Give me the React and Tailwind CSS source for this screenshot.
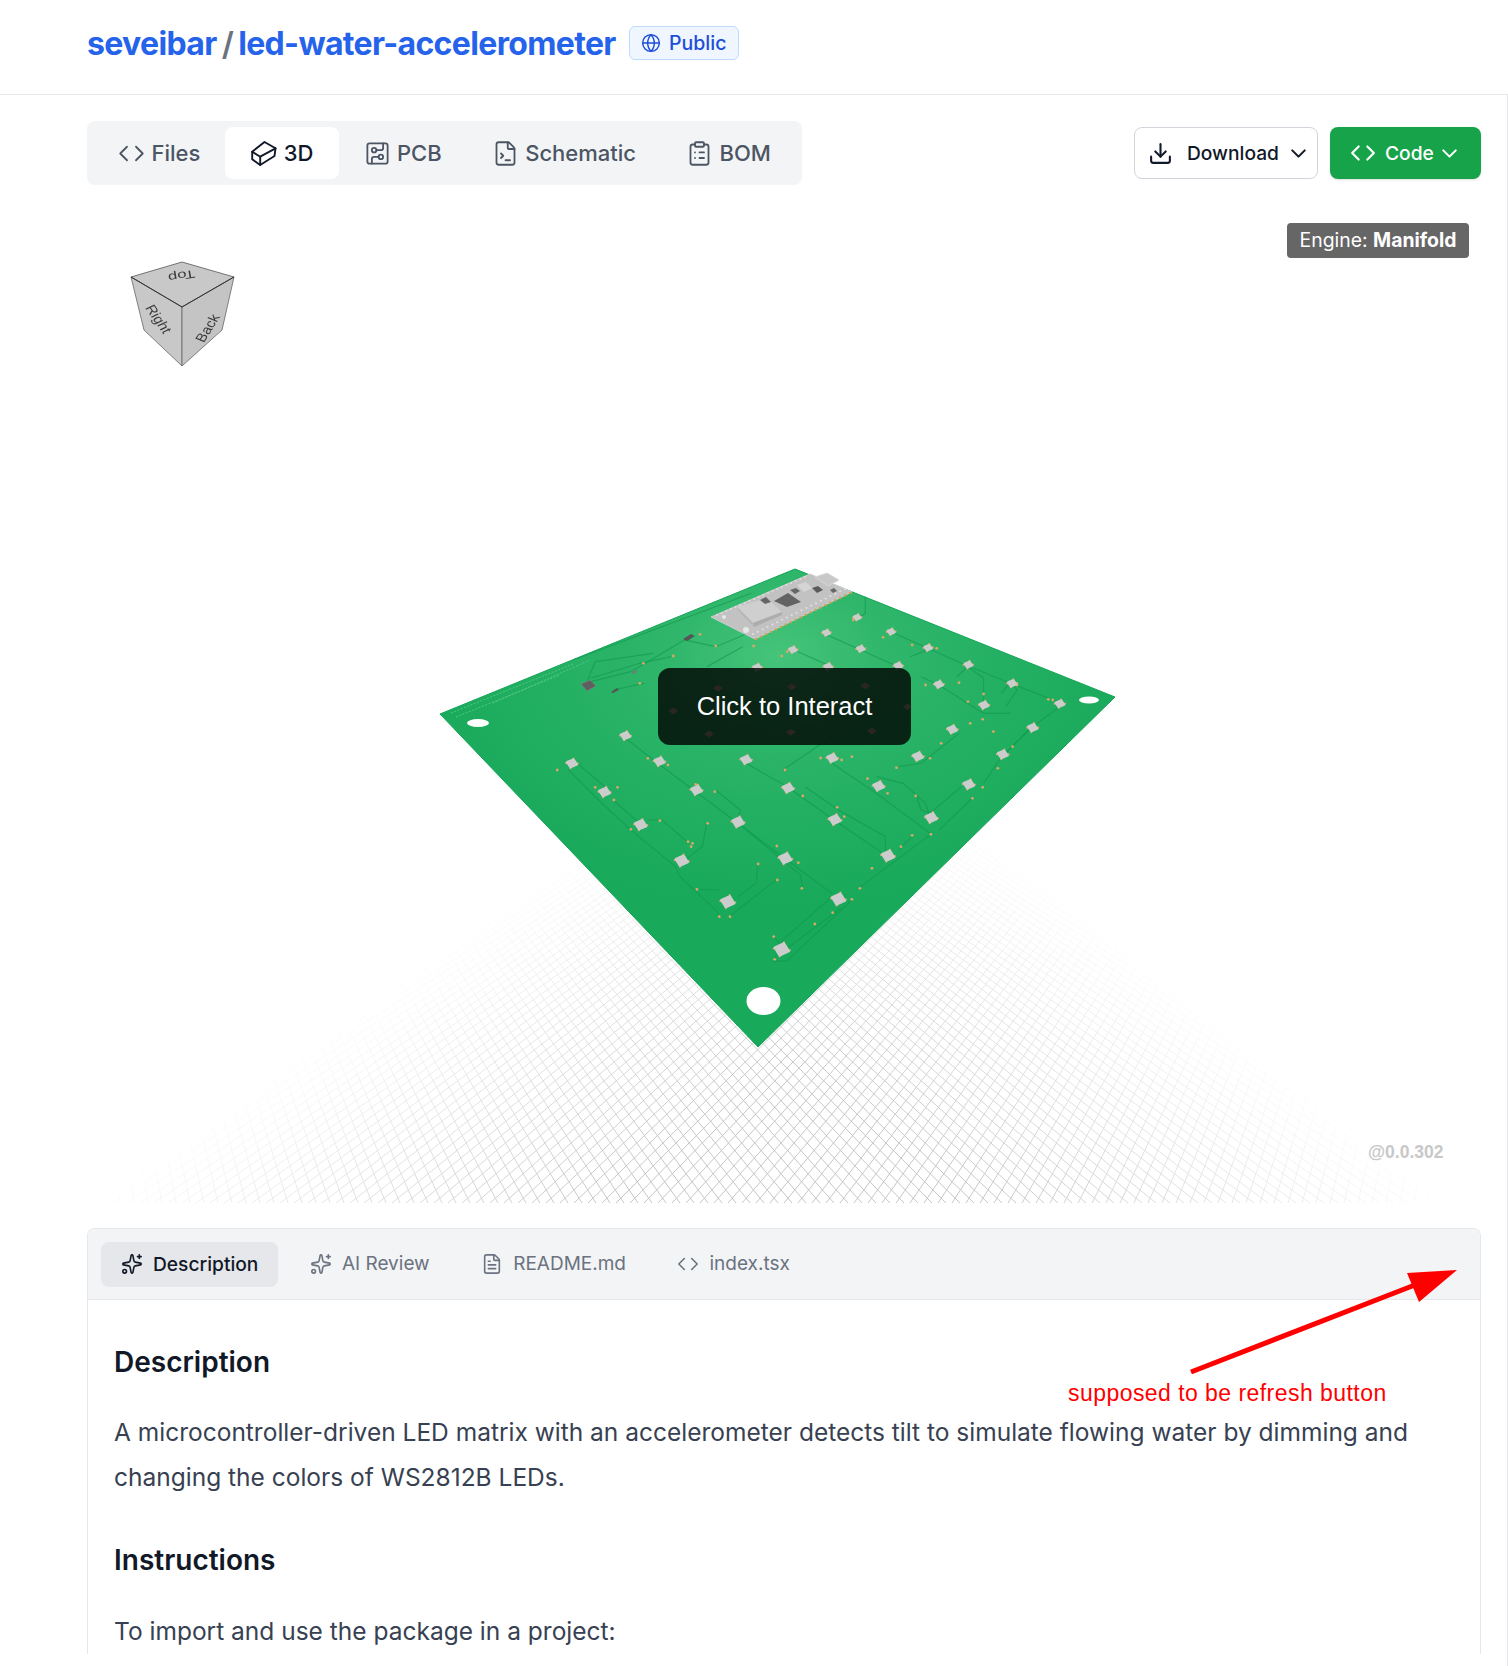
import {
  ChevronDown,
  CircuitBoard,
  ClipboardList,
  Code,
  Download,
  FileTerminal,
  FileText,
  Globe,
  Sparkles,
} from "lucide-react";

// the flat cuboid from the 3D tab, lucide's Box is too tall for it
function FlatBox({ size, className }) {
  return (
    <svg
      className={className}
      width={size}
      height={size}
      viewBox="0 0 27 27"
      fill="none"
      stroke="currentColor"
      strokeWidth="1.9"
      strokeLinejoin="round"
      strokeLinecap="round"
    >
      <path d="M14.5 2 25.5 8.3 24.5 16 10.2 25 2.2 19.3 2.2 11.7Z" />
      <path d="M2.2 11.7 10.2 16.7 25.5 8.3M10.2 16.7V25" />
    </svg>
  );
}

const tabs = [
  { label: "Files", icon: Code },
  { label: "3D", icon: FlatBox, active: true },
  { label: "PCB", icon: CircuitBoard },
  { label: "Schematic", icon: FileTerminal },
  { label: "BOM", icon: ClipboardList },
];

const cardTabs = [
  { label: "Description", icon: Sparkles, active: true },
  { label: "AI Review", icon: Sparkles },
  { label: "README.md", icon: FileText },
  { label: "index.tsx", icon: Code },
];

// crop coords of the board -> page coords
const z = (x, y) => [430 + x / 2.24, 550 + y / 3];
const pts = (list) => list.map(([x, y]) => z(x, y).map((n) => n.toFixed(1)).join(",")).join(" ");

const leds = [
  [957, 202], [888, 248], [1033, 245], [965, 296], [1116, 293], [813, 299], [1206, 344],
  [1049, 347], [892, 350], [733, 352], [1304, 400], [1140, 403], [1411, 461], [1241, 465],
  [1170, 538], [1350, 533], [438, 557], [318, 640], [514, 634], [708, 629], [901, 624],
  [1093, 619], [1283, 613], [597, 720], [391, 726], [802, 714], [1005, 708], [1207, 703],
  [472, 824], [690, 816], [907, 809], [1123, 803], [564, 932], [796, 925], [1026, 917],
  [667, 1055], [915, 1047], [788, 1198],
];

const traces = [
  [[310, 660], [385, 760], [450, 840], [550, 950], [560, 980], [640, 1080], [650, 1100]],
  [[330, 640], [400, 720]],
  [[410, 750], [470, 820]],
  [[490, 810], [520, 810], [580, 880]],
  [[620, 820], [610, 890], [570, 930]],
  [[735, 940], [730, 1000], [690, 1040]],
  [[775, 990], [670, 1100]],
  [[600, 1018], [650, 1020]],
  [[438, 565], [510, 640], [590, 720], [680, 810], [790, 920], [900, 1030]],
  [[640, 720], [695, 780], [690, 810]],
  [[700, 830], [830, 975], [835, 1015]],
  [[708, 640], [800, 710], [905, 810], [1020, 915]],
  [[840, 710], [915, 780], [1020, 860], [1020, 905]],
  [[790, 660], [900, 560]],
  [[900, 640], [1000, 730], [1120, 850]],
  [[1000, 680], [1060, 700], [1110, 760], [1120, 800]],
  [[1090, 740], [1100, 780], [1120, 790]],
  [[1140, 840], [1215, 745]],
  [[1120, 790], [1190, 710]],
  [[1120, 855], [960, 1015]],
  [[1050, 900], [1080, 860]],
  [[900, 1040], [790, 1170], [785, 1195]],
  [[945, 1050], [800, 1232], [770, 1235], [775, 1215]],
  [[920, 1075], [800, 1195]],
  [[770, 1160], [790, 1190]],
  [[1050, 650], [1100, 640], [1185, 550]],
  [[1240, 700], [1280, 620], [1350, 530], [1410, 470]],
  [[1290, 610], [1340, 540]],
  [[890, 255], [965, 300], [1040, 345]],
  [[1040, 250], [1115, 295], [1200, 345], [1300, 400], [1415, 460]],
  [[975, 140], [975, 190], [960, 205]],
  [[1075, 320], [1115, 300]],
  [[1180, 380], [1205, 350], [1240, 385], [1240, 460]],
  [[1100, 380], [1140, 405], [1240, 490], [1300, 490]],
  [[1280, 430], [1300, 395], [1315, 420], [1290, 470]],
  [[350, 400], [370, 335], [500, 310]],
  [[360, 385], [470, 340], [540, 320]],
  [[360, 395], [450, 365], [570, 270], [640, 290], [730, 240]],
  [[410, 420], [480, 400]],
  [[700, 290], [620, 350]],
  [[815, 300], [900, 350]],
  [[320, 330], [720, 130]],
];

const pads = [
  [285, 660], [370, 712], [420, 712], [412, 750], [450, 838], [515, 812], [578, 875], [588, 880],
  [585, 890], [622, 820], [735, 942], [778, 990], [833, 1015], [598, 1018], [648, 1100], [672, 1100],
  [777, 888], [825, 938], [835, 738], [795, 660], [488, 625], [533, 645], [595, 703], [638, 725],
  [912, 772], [928, 800], [1055, 890], [1080, 856], [990, 955], [963, 1015], [1122, 853], [1215, 745],
  [1238, 712], [1088, 738], [980, 686], [1025, 730], [875, 624], [922, 630], [945, 620], [1045, 653],
  [1120, 625], [1272, 655], [1305, 590], [1210, 520], [1238, 508], [1262, 545], [1145, 580], [1395, 450],
  [1385, 448], [1315, 405], [1240, 432], [1110, 405], [1185, 398], [1205, 455], [945, 1048], [902, 1088],
  [862, 1122], [770, 1160], [772, 1228], [800, 305], [788, 318], [1015, 262], [1080, 285], [1135, 295],
  [725, 288], [640, 288], [545, 318], [478, 340], [470, 400], [605, 253], [948, 210],
];

const darkSpots = [
  [545, 483], [645, 415], [810, 410], [975, 407], [625, 552], [808, 547], [990, 543], [1070, 470],
];

// grid lines: equal steps along the bottom edge, meeting at the two vanishing points
const gridBottom = 1203;
const gridTop = 700;
const horizon = 252;
const gridStep = 14;
const linesTo = (vx, from, to) => {
  let d = "";
  for (let x = from; x <= to; x += gridStep) {
    const x2 = vx + ((x - vx) * (gridTop - horizon)) / (gridBottom - horizon);
    d += `M${x} ${gridBottom}L${x2.toFixed(1)} ${gridTop}`;
  }
  return d;
};
const gridPath = linesTo(1568, -700, 1568) + linesTo(-6, -6, 2300);

// header pins along the two long edges of the pico
const picoPins = [];
for (let i = 0; i < 20; i++) {
  const t = i / 19;
  picoPins.push({
    gold: [756 + t * 94, 639 - t * 46],
    hole: [753 + t * 92, 634 - t * 45],
    top: [717 + t * 88, 615 - t * 38],
  });
}

function Led({ x, y }) {
  const [cx, cy] = z(x, y);
  const h = 2.4 + (y / 1200) * 4.6;
  const v = 1.4 + (y / 1200) * 4.6;
  const points = [
    [cx - h, cy - v * 0.3],
    [cx + h * 0.3, cy - v],
    [cx + h, cy + v * 0.3],
    [cx - h * 0.3, cy + v],
  ];
  return (
    <g>
      <circle cx={points[0][0] - 1} cy={points[0][1] + 1} r="1.1" fill="#d9a868" />
      <circle cx={points[1][0]} cy={points[1][1] - 1} r="1.1" fill="#d9a868" />
      <circle cx={points[2][0] + 1} cy={points[2][1] - 1} r="1.1" fill="#d9a868" />
      <circle cx={points[3][0]} cy={points[3][1] + 1} r="1.1" fill="#d9a868" />
      <polygon
        points={points.map((p) => p.join(",")).join(" ")}
        fill="#cccccc"
        stroke="#cccccc"
        strokeWidth="2.4"
        strokeLinejoin="round"
      />
    </g>
  );
}

function Scene() {
  return (
    <svg className="absolute inset-0 w-full h-full" viewBox="87 185 1394 1018">
      <defs>
        <linearGradient id="fadeL" gradientUnits="userSpaceOnUse" x1="125" y1="1175" x2="300" y2="1419">
          <stop offset="0" stopColor="#000" />
          <stop offset="1" stopColor="#fff" />
        </linearGradient>
        <linearGradient id="fadeR" gradientUnits="userSpaceOnUse" x1="1450" y1="1200" x2="1264" y2="1434">
          <stop offset="0" stopColor="#000" />
          <stop offset="1" stopColor="#fff" />
        </linearGradient>
        <mask id="maskL" maskUnits="userSpaceOnUse" x="87" y="185" width="1394" height="1018">
          <rect x="87" y="185" width="1394" height="1018" fill="url(#fadeL)" />
        </mask>
        <mask id="maskR" maskUnits="userSpaceOnUse" x="87" y="185" width="1394" height="1018">
          <rect x="87" y="185" width="1394" height="1018" fill="url(#fadeR)" />
        </mask>
        <radialGradient
          id="boardGlow"
          gradientUnits="userSpaceOnUse"
          cx="0"
          cy="0"
          r="1"
          gradientTransform="translate(778 655) scale(370 250)"
        >
          <stop offset="0" stopColor="#45c47a" />
          <stop offset="0.3" stopColor="#2fb66b" />
          <stop offset="0.65" stopColor="#22af62" />
          <stop offset="1" stopColor="#19a95b" />
        </radialGradient>
      </defs>

      {/* ground grid */}
      <g mask="url(#maskL)">
        <g mask="url(#maskR)">
          <path d={gridPath} stroke="#c6c6c6" strokeWidth="1" fill="none" />
        </g>
      </g>

      {/* board */}
      <polygon points="795,569 1115,697 758,1047 440,714" fill="url(#boardGlow)" stroke="#12a456" strokeWidth="1" strokeLinejoin="round" />
      <ellipse cx="478" cy="723" rx="11" ry="4" fill="#fff" />
      <ellipse cx="1089" cy="700" rx="10" ry="3.5" fill="#fff" />
      <ellipse cx="763.5" cy="1001" rx="17" ry="14" fill="#fff" />

      {/* silkscreen */}
      <g stroke="#6fd79b" strokeWidth="1" strokeDasharray="2 1.5" opacity="0.6">
        <line x1="451" y1="713" x2="573" y2="664" />
        <line x1="456" y1="717" x2="560" y2="675" />
        <line x1="493" y1="703" x2="590" y2="660" />
      </g>

      {traces.map((t, i) => (
        <polyline key={i} points={pts(t)} fill="none" stroke="#11994e" strokeWidth="1.2" opacity="0.65" />
      ))}

      {pads.map(([x, y], i) => {
        const [cx, cy] = z(x, y);
        return <circle key={i} cx={cx} cy={cy} r="1.4" fill="#d9a868" />;
      })}

      {leds.map(([x, y], i) => (
        <Led key={i} x={x} y={y} />
      ))}

      {/* small parts */}
      <polygon points="581,684 590,680 596,686 587,691" fill="#5f5f5f" stroke="#8c8c8c" strokeWidth="0.5" />
      <polygon points="683,639 691,634 695,636 687,641" fill="#555" />
      <polygon points="611,692 617,688 619,690 613,693" fill="#555" />
      <polygon points="632,672 636,670 637,672 633,674" fill="#777" />

      {/* pico */}
      <polygon points="711,617 810,574 852,592 755,639" fill="#c2c2c2" stroke="#cdcdcd" strokeWidth="1" strokeLinejoin="round" />
      {picoPins.map((p, i) => (
        <g key={i}>
          <rect x={p.gold[0] - 1} y={p.gold[1] - 1} width="2.4" height="2" fill="#d4a04f" />
          <circle cx={p.hole[0]} cy={p.hole[1]} r="1" fill="#e2e2e2" />
          <circle cx={p.top[0]} cy={p.top[1]} r="1" fill="#dedede" />
        </g>
      ))}
      <polygon points="737,607 767,598 782,612 753,623" fill="#cfcfcf" />
      <polygon points="753,623 782,612 782,615 754,627" fill="#adadad" />
      <polygon points="737,607 753,623 754,627 738,610" fill="#b5b5b5" />
      <polygon points="774,601 788,593 801,602 787,607" fill="#636363" />
      <polygon points="760,600 766,597 771,602 765,604" fill="#666" />
      <polygon points="790,590 796,588 800,591 795,594" fill="#666" />
      <polygon points="812,588 818,586 823,590 817,593" fill="#5a5a5a" />
      <polygon points="830,590 834,588 837,591 833,593" fill="#666" />
      <polygon points="797,585 806,582 812,588 804,592" fill="#d5d5d5" />
      <polygon points="815,577 827,573 839,580 828,586" fill="#c8c8c8" stroke="#d8d8d8" strokeWidth="1" />
      <circle cx="724" cy="617" r="2" fill="#e6e6e6" />
      <circle cx="746" cy="630" r="3" fill="#e6e6e6" />
    </svg>
  );
}

function Cube() {
  return (
    <svg className="absolute left-[40px] top-[73px] w-[112px] h-[112px] blur-[0.3px]" viewBox="128 258 112 112">
      <polygon points="132,277 183,262 235,277 183,307" fill="#c8c8c8" stroke="#555" strokeWidth="0.8" />
      <polygon points="132,277 183,307 183,366 145,330" fill="#c8c8c8" stroke="#666" strokeWidth="0.8" />
      <polygon points="235,277 183,307 183,366 223,330" fill="#c4c4c4" stroke="#666" strokeWidth="0.8" />
      <line x1="132" y1="277" x2="183" y2="307" stroke="#333" strokeWidth="1" />
      <line x1="235" y1="277" x2="183" y2="307" stroke="#333" strokeWidth="1" />
      <g fontFamily='"Liberation Sans", sans-serif' fontSize="14" fill="#3a3a3a" textAnchor="middle">
        <text transform="translate(182 272) rotate(170) scale(1.2 0.8)">Top</text>
        <text transform="translate(155 321) rotate(55) skewX(-10)">Right</text>
        <text transform="translate(213 330) rotate(-58) skewX(10)">Back</text>
      </g>
    </svg>
  );
}

function App() {
  return (
    <div className="relative h-[1666px] overflow-hidden bg-white font-['Inter',sans-serif]">
      {/* Header */}
      <div className="h-[95px] border-b border-[#e5e7eb] pl-[87px] pt-[26px] flex items-start">
        <h1 className="flex items-center h-[36px] text-[32px] font-bold tracking-[-0.65px] text-[#2563eb]">
          <span>seveibar</span>
          <span className="mx-[5px] text-[#6b7280] font-semibold">/</span>
          <span>led-water-accelerometer</span>
        </h1>
        <div className="ml-[13px] h-[34px] w-[110px] flex items-center justify-center gap-[8px] rounded-md border border-[#bfdbfe] bg-[#eff6ff] text-[19.5px] font-medium text-[#1d4ed8]">
          <Globe size={20} strokeWidth={1.75} />
          <span className="pt-[1px]">Public</span>
        </div>
      </div>

      <div className="h-[1571px] border-r border-[#e5e7eb] pl-[87px] pr-[26px]">
        {/* Toolbar */}
        <div className="pt-[26px] flex items-center justify-between">
          <div className="flex p-[6px] rounded-lg bg-[#f3f4f6]">
            {tabs.map((tab) => (
              <div
                key={tab.label}
                className={`h-[52px] pl-[25px] pr-[25px] flex items-center gap-[6.5px] rounded-lg text-[22px] font-medium ${
                  tab.active ? "bg-white text-[#111827]" : "text-[#4b5563]"
                }`}
              >
                <tab.icon size={27} strokeWidth={1.6} />
                {tab.label}
              </div>
            ))}
          </div>

          <div className="flex gap-[12px]">
            <button className="h-[52px] w-[184px] pl-[13px] flex items-center rounded-lg border border-[#d1d5db] bg-white text-[19.2px] font-medium text-[#111827]">
              <Download size={25} strokeWidth={2} />
              <span className="ml-[14px] pt-[1px]">Download</span>
              <ChevronDown size={25} strokeWidth={2} className="ml-[7px]" />
            </button>
            <button className="h-[52px] w-[151px] pl-[20px] flex items-center rounded-lg bg-[#16a34a] text-[19.2px] font-medium text-white shadow-sm">
              <Code size={26} strokeWidth={2} />
              <span className="ml-[9px] pt-[1px]">Code</span>
              <ChevronDown size={25} strokeWidth={2} className="ml-[3px]" />
            </button>
          </div>
        </div>

        {/* 3D viewer */}
        <div className="relative h-[1018px]">
          <Scene />
          <Cube />
          <div className="absolute right-[12px] top-[38px] h-[35px] w-[182px] flex items-center justify-center rounded bg-[#666666] text-[19.4px] text-white">
            Engine:&nbsp;<span className="font-bold">Manifold</span>
          </div>
          <div className="absolute left-[571px] top-[483px] h-[77px] w-[253px] flex items-center justify-center rounded-xl bg-black/80 font-['Liberation_Sans',sans-serif] text-[25.5px] text-white">
            <svg className="absolute inset-0" width="253" height="77" viewBox="658 668 253 77">
              {darkSpots.map(([x, y], i) => {
                const [cx, cy] = z(x, y);
                return (
                  <polygon
                    key={i}
                    points={`${cx - 5},${cy} ${cx},${cy - 3.5} ${cx + 5},${cy} ${cx},${cy + 3.5}`}
                    fill="#2a2626"
                  />
                );
              })}
            </svg>
            <span className="relative">Click to Interact</span>
          </div>
          <div className="absolute left-[1281px] top-[954px] font-['Liberation_Sans',sans-serif] text-[17.5px] font-bold text-[#c8c8c8]">
            @0.0.302
          </div>
        </div>

        {/* Description card */}
        <div className="mt-[25px] rounded-t-lg border border-[#e5e7eb] border-b-0">
          <div className="h-[71px] px-[13px] flex items-center gap-[11.5px] rounded-t-lg border-b border-[#e5e7eb] bg-[#f3f4f6]">
            {cardTabs.map((tab) => (
              <div
                key={tab.label}
                className={`h-[45px] px-[20px] flex items-center gap-[10px] rounded-lg ${
                  tab.active ? "bg-[#e5e7eb] text-[#111827] font-medium text-[19.2px]" : "text-[#6b7280] text-[19px]"
                }`}
              >
                <tab.icon size={22} strokeWidth={1.75} />
                <span className={tab.active ? "" : "pt-[1px]"}>{tab.label}</span>
              </div>
            ))}
          </div>
          <div className="px-[26px] pt-[42px] text-[24.5px] leading-[45px] text-[#374151]">
            <h2 className="text-[28px] font-semibold leading-[40px] text-[#111827]">Description</h2>
            <p className="mt-[28px]">
              A microcontroller-driven LED matrix with an accelerometer detects tilt to simulate flowing water by dimming
              and changing the colors of WS2812B LEDs.
            </p>
            <h2 className="mt-[40px] text-[28px] font-semibold leading-[40px] text-[#111827]">Instructions</h2>
            <p className="mt-[29px]">To import and use the package in a project:</p>
          </div>
        </div>
      </div>

      {/* Annotation */}
      <svg className="absolute inset-0 w-[1508px] h-[1666px] pointer-events-none" viewBox="0 0 1508 1666">
        <line x1="1191" y1="1372" x2="1420" y2="1283" stroke="#ff0000" strokeWidth="5" />
        <polygon points="1457,1270 1407,1273 1419,1302" fill="#ff0000" />
      </svg>
      <div className="absolute left-[1068px] top-[1379px] font-['Liberation_Sans',sans-serif] text-[23px] leading-[28px] tracking-[0.45px] text-[#ff0000]">
        supposed to be refresh button
      </div>
    </div>
  );
}

export default App;
